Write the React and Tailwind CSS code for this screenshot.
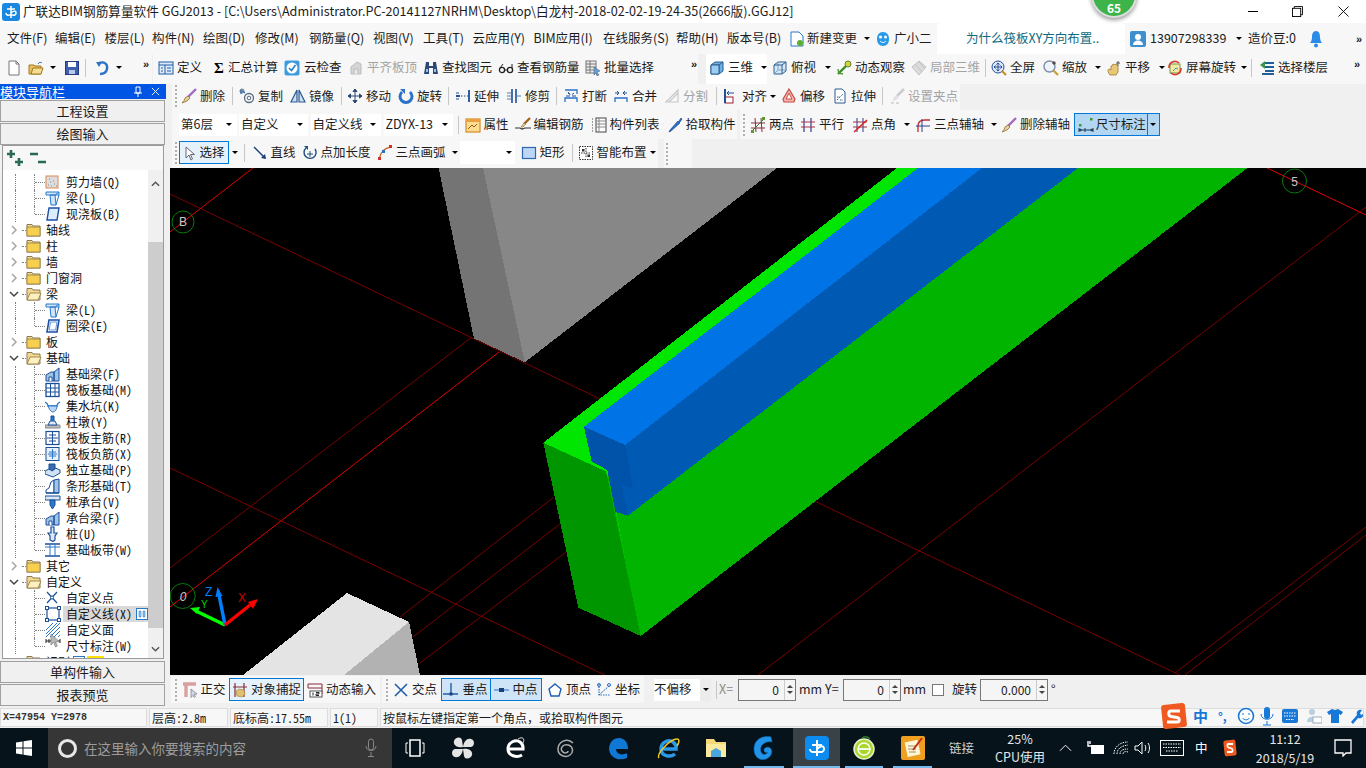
import React from "react";

const cjk = "font-['Noto_Sans_CJK_SC',sans-serif]";
const mono = "font-['Noto_Sans_Mono_CJK_SC','Liberation_Mono','Noto_Sans_CJK_SC',monospace]";

const Svg = ({ children, c = "w-4 h-4" }) => (
  <svg viewBox="0 0 16 16" className={`${c} shrink-0`} fill="none">
    {children}
  </svg>
);

// toolbar icons
const ic = {
  page: <Svg><path d="M3 1h7l3 3v11H3z" fill="#fff" stroke="#777" /><path d="M10 1v3h3" stroke="#777" /></Svg>,
  open: <Svg><path d="M1 5h5l1 1h6v8H1z" fill="#e8c060" stroke="#a07a20" /><path d="M3 14l2-6h10l-2 6z" fill="#f6dc90" stroke="#a07a20" /><path d="M10 4c1-2 3-2 4-1" stroke="#3a7ac0" /></Svg>,
  save: <Svg><rect x="1.5" y="1.5" width="13" height="13" fill="#3f5fb0" stroke="#233a80" /><rect x="4" y="2" width="8" height="5" fill="#fff" /><rect x="5" y="10" width="6" height="4" fill="#bcc8e8" /></Svg>,
  undo: <Svg><path d="M5 3c5-2 9 1 8 6s-5 5-7 5" stroke="#2a72c8" strokeWidth="2.4" /><path d="M2 2l6 0-3 5z" fill="#2a72c8" /></Svg>,
  define: <Svg><rect x="1" y="2" width="14" height="12" fill="#dfeaf6" stroke="#1f5ea8" /><path d="M1 5h14M7 5v9M3 8h2M3 11h2M9 8h4M9 11h4" stroke="#1f5ea8" /></Svg>,
  sigma: <span className="block w-4 text-center text-[15px] leading-4 font-bold text-black font-['Liberation_Serif',serif]">Σ</span>,
  cloud: <Svg><rect x="0.5" y="0.5" width="15" height="15" rx="2" fill="#3d9be0" /><circle cx="8" cy="8" r="5.5" fill="#fff" /><path d="M5 8l2.5 2.5L11.5 5" stroke="#2a7cc4" strokeWidth="1.6" /></Svg>,
  flat: <Svg><path d="M3 14V7l6-5 4 2v10z" fill="#d5d5d5" stroke="#bbb" /><path d="M6 14V9h4v5" fill="#e8e8e8" stroke="#bbb" /></Svg>,
  binoc: <Svg><path d="M3 2h3v4h4V2h3l2 12H10V8H6v6H1z" fill="#2c4a78" /><path d="M3 9h2v3H3zM11 9h2v3h-2z" fill="#9ec0ea" /></Svg>,
  glass: <Svg><circle cx="4" cy="10" r="2.6" stroke="#222" strokeWidth="1.3" /><circle cx="12" cy="10" r="2.6" stroke="#222" strokeWidth="1.3" /><path d="M2 8l3-4M6.5 10h3M14 8v-4" stroke="#222" /></Svg>,
  batch: <Svg><rect x="1" y="1" width="10" height="12" fill="#eee" stroke="#777" /><path d="M1 4h10M1 7h10M1 10h10M5 1v12" stroke="#777" /><path d="M9 7l6 4-3 1 2 3-2 1-1-3-2 2z" fill="#6aa0d8" stroke="#456" strokeWidth=".5" /></Svg>,
  cube: <Svg><path d="M2 5l4-3h8v9l-4 3H2z" fill="#6eb0e4" stroke="#2a5f90" /><path d="M2 5h8v9M10 5l4-3" stroke="#2a5f90" /><path d="M2 5h8v9H2z" fill="#9bcdf2" stroke="#2a5f90" /></Svg>,
  top: <Svg><path d="M2 5l4-3h8v9l-4 3H2z" fill="#d6e7f6" stroke="#2a5f90" /><path d="M6 2v8h8M6 10l-4 4" stroke="#7aa5cc" /><path d="M2 5h8v9M10 5l4-3" stroke="#2a5f90" /></Svg>,
  orbit: <Svg><path d="M2 14L13 3" stroke="#3a8a28" strokeWidth="2.4" /><circle cx="12" cy="4" r="3" fill="#d8d040" stroke="#5a8a20" /><path d="M2 9c0 3 2 5 5 5" stroke="#4a9a30" strokeWidth="1.4" /></Svg>,
  local: <Svg><path d="M8 1l7 6-7 8-7-8z" fill="#dcdcdc" stroke="#c0c0c0" /><path d="M4 4l7 8M8 2l5 6" stroke="#c4c4c4" /></Svg>,
  full: <Svg><circle cx="7" cy="7" r="6" fill="#dbe8f8" stroke="#2a4f9a" /><path d="M7 3v8M3 7h8M7 3L5.5 4.5M7 3l1.5 1.5M7 11L5.5 9.5M7 11l1.5-1.5M3 7l1.500-1.500M3 7l1.500 1.500M11 7L9.500 5.500M11 7L9.500 8.500" stroke="#2a4f9a" /><path d="M11 11l4 4" stroke="#c88a20" strokeWidth="2" /></Svg>,
  zoom: <Svg><circle cx="6.500" cy="6.500" r="5.500" fill="#eef3fa" stroke="#7f8ea8" strokeWidth="1.400" /><path d="M10.500 10.500l4.500 4.500" stroke="#c8a030" strokeWidth="2.200" /><path d="M11 1v4M9 3h4" stroke="#333" /></Svg>,
  pan: <Svg><path d="M4 15c-2-3-3-5-1-6l2 1V6l1 0 1-2 2 1 1-1 2 2v6l-2 3z" fill="#e8c878" stroke="#9a7a30" strokeWidth=".8" /><path d="M12 1v5M10 3h4" stroke="#555" /></Svg>,
  screen: <Svg><rect x="3" y="4" width="10" height="9" fill="#f5e9a0" stroke="#6a9a50" /><path d="M2 8a6 6 0 0 1 10-5M14 8a6 6 0 0 1-10 5" stroke="#d84030" strokeWidth="1.600" /><path d="M6 11l3-3 2 1" stroke="#3a8fd0" /></Svg>,
  floors: <Svg><path d="M6 3h9M6 7h9M6 11h9M3 14h12" stroke="#1f5f9a" strokeWidth="1.800" /><path d="M1 5l5-4v8z" fill="#3a9a4a" /></Svg>,
  brush: <Svg><path d="M15 1L7 9" stroke="#a06ac0" strokeWidth="2.400" /><path d="M7 8l2 2-3 3-5 2c2-2 3-4 3-5z" fill="#e9d29a" stroke="#8a6a30" strokeWidth=".8" /></Svg>,
  copy: <Svg><circle cx="10" cy="10" r="4.500" stroke="#5a6a80" strokeWidth="1.300" /><circle cx="10" cy="10" r="1.800" stroke="#5a6a80" /><path d="M2 2l4 3M2 2v4" stroke="#2a72c8" strokeWidth="1.300" /><circle cx="3" cy="3" r="2" stroke="#5a6a80" /></Svg>,
  mirror: <Svg><path d="M7 2L1 14h6zM9 2l6 12H9z" stroke="#2c5a92" strokeWidth="1.200" fill="#cfe0f2" /></Svg>,
  move: <Svg><path d="M8 1v14M1 8h14M8 1L6 3.500h4zM8 15l-2-2.500h4zM1 8l2.500-2v4zM15 8l-2.500-2v4z" stroke="#2a4a78" fill="#2a4a78" /></Svg>,
  rotate: <Svg><path d="M4 4a6 6 0 1 0 8 0" stroke="#2a72c8" strokeWidth="3" /><path d="M2 1h5v5z" fill="#2a72c8" /></Svg>,
  extend: <Svg><path d="M14 2v12M1 8h4" stroke="#1f4f98" strokeWidth="1.800" /><path d="M1 5h3M1 11h3" stroke="#1f4f98" /><path d="M6 8h7" stroke="#1f4f98" strokeDasharray="1.500 1.500" /></Svg>,
  trim: <Svg><path d="M6 1v14M10 1v14" stroke="#1f4f98" strokeWidth="1.600" /><path d="M1 8h4M11 8h4M1 5h4M1 11h4" stroke="#5a7ab0" /></Svg>,
  split: <Svg><path d="M2 14V10h12v4M2 2h12v4" stroke="#2a72c8" strokeWidth="1.300" /><path d="M3 8h4M9 8h4M5 5l2 1.500L5 4M11 5L9 6.500" stroke="#1f4f98" /></Svg>,
  merge: <Svg><path d="M2 14V10h12v4" stroke="#2a72c8" strokeWidth="1.300" /><path d="M2 5h4M10 5h4M4 3L6 5 4 7M12 3l-2 2 2 2" stroke="#1f4f98" /></Svg>,
  cut: <Svg><path d="M2 14L14 2v12zM5 14L14 5" stroke="#c8c8c8" strokeWidth="1.200" /></Svg>,
  align: <Svg><rect x="2" y="9" width="8" height="6" fill="#fff" stroke="#a02030" /><path d="M2 1v14" stroke="#1f4f98" strokeWidth="2" /><path d="M4 5h7M4 5l2-2M4 5l2 2" stroke="#1f4f98" /></Svg>,
  offset: <Svg><path d="M8 1l6 10-1 3H3l-1-3z" fill="#f4b6b0" stroke="#c84a40" strokeWidth="1.200" /><path d="M8 5l3 6H5z" fill="#fff" stroke="#c84a40" /></Svg>,
  stretch: <Svg><path d="M3 1h7l3 3v11H3z" fill="#fff" stroke="#2c5a92" /><path d="M5 12l6-6M5 9h3M8 12h3" stroke="#2c5a92" strokeDasharray="1.500 1" /></Svg>,
  grip: <Svg><path d="M15 1L8 8" stroke="#ccc" strokeWidth="2.500" /><path d="M8 7l2 2-3 3-4 1c1-1 2-3 2-4z" fill="#e0e0e0" /><path d="M2 15h3M7 15h3" stroke="#bbb" /></Svg>,
  attr: <Svg><rect x="1" y="2" width="14" height="13" fill="#fbdc90" stroke="#d88a20" strokeWidth="1.200" /><path d="M1 2h14v3H1z" fill="#e8a040" /><path d="M3 12l4-4 2 2 3-3" stroke="#a05a10" /></Svg>,
  rebar: <Svg><path d="M15 1L9 7" stroke="#a86020" strokeWidth="2.400" /><path d="M9 6l1.500 1.500L8 10H6z" fill="#e9d29a" stroke="#8a6a30" strokeWidth=".6" /><path d="M0 11h5l2 1 3-1h6" stroke="#333" strokeWidth="1.200" /></Svg>,
  list: <Svg><rect x="5" y="1" width="10" height="14" fill="#fff" stroke="#444" /><path d="M5 4h10M5 7h10M5 10h10M8 1v14" stroke="#888" /><path d="M1 2h2M1 5h2M1 8h2M1 11h2M1 14h2" stroke="#444" strokeDasharray="1 1" /></Svg>,
  pick: <Svg><path d="M14 1l1 1-2 3-1-1zM3 13l8-9 2 2-9 8-2 1z" fill="#2a72c8" stroke="#1a4a90" strokeWidth=".7" /></Svg>,
  two: <Svg><path d="M1 6h14M1 11h14M5 1l1 14M11 1l1 14" stroke="#8a2a40" /><path d="M2 14L14 2" stroke="#3a7a30" /><rect x="1" y="13" width="3" height="3" fill="#5a9a30" /><rect x="12" y="0" width="3" height="3" fill="#5a9a30" /></Svg>,
  para: <Svg><path d="M4 1v14M11 1v14" stroke="#2c3f8a" strokeWidth="1.200" /><path d="M1 5h14M1 10h14" stroke="#b03048" strokeWidth="1.200" /></Svg>,
  angle: <Svg><path d="M5 1v14M11 1v14" stroke="#2c3f8a" /><path d="M1 5h14M1 10h14" stroke="#a03048" /><path d="M2 15L15 3" stroke="#d81818" strokeWidth="1.300" /></Svg>,
  arcax: <Svg><path d="M3 15V9c0-4 3-6 7-6h5" stroke="#c82828" strokeWidth="1.300" /><path d="M1 9h14M7 2v13" stroke="#2c3f8a" /></Svg>,
  del: <Svg><path d="M15 1L7 9" stroke="#a06ac0" strokeWidth="2.400" /><path d="M7 8l2 2-3 3-5 2c2-2 3-4 3-5z" fill="#e9d29a" stroke="#8a6a30" strokeWidth=".8" /></Svg>,
  dim: <Svg><path d="M1 11v4M15 11v4M1 13h14M1 13l2-1v2zM15 13l-2-1v2zM7 11v4" stroke="#1b3a5a" /><rect x="1" y="7" width="2.500" height="2.500" fill="#3a9a30" /><rect x="12" y="1" width="2.500" height="2.500" fill="#3a9a30" /></Svg>,
  arrow: <Svg><path d="M5 2v11l3-3 2 5 1.500-1-2-4.500h4z" fill="#fff" stroke="#667" /></Svg>,
  line: <Svg><path d="M2 2l11 11" stroke="#1b3f78" strokeWidth="1.400" /><path d="M14 14l-5-1 4-4z" fill="#1b3f78" /></Svg>,
  plen: <Svg><path d="M4 3a6 6 0 1 0 9 1" stroke="#1f4f80" strokeWidth="1.400" /><path d="M8 6v6M5 9h6" stroke="#1f4f80" /><path d="M2 1h4v4z" fill="#1f4f80" /></Svg>,
  arc: <Svg><path d="M2 15C3 8 7 3 14 2" stroke="#c8682a" strokeWidth="1.400" /><rect x="1" y="12" width="3" height="3" fill="#d03030" /><rect x="5" y="5" width="3" height="3" fill="#2a72c8" /><rect x="12" y="0" width="3" height="3" fill="#d03030" /></Svg>,
  rect: <Svg><rect x="1.500" y="2.500" width="13" height="11" fill="#bcd6f4" stroke="#2f66b0" strokeWidth="1.200" /></Svg>,
  smart: <Svg><rect x="1.500" y="1.500" width="13" height="13" fill="#fff" stroke="#333" strokeDasharray="1.500 1" /><path d="M8 3v10M3 8h10" stroke="#333" strokeDasharray="1.500 1" /><rect x="4" y="4" width="2.500" height="2.500" fill="#333" /><rect x="9.500" y="9.500" width="2.500" height="2.500" fill="#333" /></Svg>,
  ortho: <Svg><path d="M1 2h13M4 2v13" stroke="#d9a0a0" strokeWidth="3.400" /><path d="M9 7l6 5-3 .5 1.500 2-1 1-1.500-2-2 2z" fill="#cfd8e4" stroke="#667" strokeWidth=".6" /></Svg>,
  snap: <Svg><path d="M3 1v14M12 1v14M1 5h14" stroke="#8a2a3a" strokeWidth="1.200" /><path d="M4 9l3-2 5 1 1 4-3 3-5-1z" fill="#e0c070" stroke="#a08030" strokeWidth=".6" /></Svg>,
  dyn: <Svg><path d="M1 2h14M1 6h14M1 2v4M15 2v10" stroke="#8a2a3a" /><rect x="3" y="9" width="12" height="6" fill="#fff" stroke="#555" /><path d="M6 10.500v3M9 10.500h3v1.500H9v1.500h3" stroke="#222" /></Svg>,
  cross: <Svg><path d="M2 2l12 12M14 2L2 14" stroke="#1f5fb0" strokeWidth="1.600" /></Svg>,
  perp: <Svg><path d="M0 12h15M8 1v11" stroke="#1f5fb0" strokeWidth="1.400" /><rect x="6.500" y="10.500" width="3" height="3" fill="#1b3f78" /></Svg>,
  mid: <Svg><path d="M0 8h15" stroke="#5a8fd0" strokeWidth="1.400" /><rect x="5" y="6" width="5" height="4" fill="#1b3f78" /></Svg>,
  vertex: <Svg><path d="M8 2l6 5-2 7H4L2 7z" fill="#fff" stroke="#1f5fb0" strokeWidth="1.400" /></Svg>,
  coord: <Svg><path d="M3 2v11h11" stroke="#2a72c8" strokeDasharray="1.500 1" strokeWidth="1.200" /><path d="M3 13L14 3" stroke="#1f5fb0" strokeDasharray="2 1" /><circle cx="3" cy="3" r="1.500" stroke="#2a72c8" /><circle cx="13" cy="3" r="1.500" stroke="#2a72c8" /></Svg>,
};

// tree icons
const tr = {
  wall: <Svg><rect x="1" y="2" width="12" height="12" fill="#ddd" stroke="#e08850" /><path d="M3 11h1M6 12h1M9 10h1M5 8h1M8 7h1M11 12h1M4 5h1" stroke="#888" /></Svg>,
  beam: <Svg><path d="M1 2h13v3H1zM5 5h5l1 10H6z" fill="#cfe6f8" stroke="#2a78c8" /><path d="M10 5l4-3M11 15l3-10" stroke="#2a78c8" /></Svg>,
  slab: <Svg><path d="M4 2h10l-2 12H2z" fill="#dcecfb" stroke="#1b4fa8" strokeWidth="1.400" /></Svg>,
  ring: <Svg><path d="M4 2h10l-2 12H2z" fill="#fff" stroke="#1b4fa8" strokeWidth="1.600" /><path d="M5.500 4h6.500l-1.400 8H4.300z" stroke="#6a9ad8" /></Svg>,
  fbeam: <Svg><path d="M1 15V9l5-3h3v9zM9 15V6l5-4v13z" fill="#9ec4ea" stroke="#1b4f98" /><path d="M4 15V11h3v4" fill="#fff" stroke="#1b4f98" /></Svg>,
  raft: <Svg><rect x="1" y="1.500" width="13" height="13" fill="#fff" stroke="#1b4f98" strokeWidth="1.300" /><path d="M1 6h13M1 10h13M5.500 1.500v13M10 1.500v13" stroke="#1b4f98" /></Svg>,
  pit: <Svg><path d="M0 4c2 1 3 2 3 4h9c0-2 1-3 3-4" stroke="#2a78c8" strokeWidth="1.300" /><path d="M3 8c1 3 3 6 5 6s4-3 4-6z" fill="#bcd6f0" stroke="#2a78c8" /></Svg>,
  pier: <Svg><path d="M0 11h15v3H0z" fill="#bbb" stroke="#888" /><path d="M3 11l2-4h5l2 4z" fill="#dce8f6" stroke="#1b4f98" /><path d="M6 7V2h3v5" fill="#2a78c8" stroke="#1b4f98" /></Svg>,
  main: <Svg><rect x="1" y="1.500" width="13" height="13" fill="#fff" stroke="#1b4f98" strokeWidth="1.200" /><path d="M7.500 1.500v13M2 8h11M4 5h7M4 11h7" stroke="#1b4f98" /></Svg>,
  neg: <Svg><rect x="1" y="1.500" width="13" height="13" fill="#e8f0fa" stroke="#1b4f98" /><path d="M7.500 3v10M3 8h9M4 6h7M4 10h7" stroke="#2a78c8" /></Svg>,
  iso: <Svg><path d="M0 9l8-4 7 3v3l-7 4-8-3z" fill="#cfe2f6" stroke="#1b4f98" /><path d="M4 7V2h6v5l-3 2z" fill="#3a6ab0" stroke="#1b4f98" /></Svg>,
  strip: <Svg><path d="M1 15v-3l3-2 2-6 3-2v13z" fill="#fff" stroke="#1b4f98" /><path d="M9 2l5-1v14H9z" fill="#9ec4ea" stroke="#1b4f98" /><path d="M1 15h13" stroke="#1b4f98" strokeWidth="1.300" /></Svg>,
  cap: <Svg><path d="M0 2h15v4H0z" fill="#dce8f6" stroke="#1b4f98" /><path d="M5 6h5v5l-2.500 4L5 11z" fill="#2a78c8" stroke="#1b4f98" /></Svg>,
  pile: <Svg><path d="M6 1h3v6h3l-2 3v4l-2 1.500L5 14v-4L3 7h3z" fill="#dce8f6" stroke="#1b4f98" strokeWidth="1.200" /></Svg>,
  band: <Svg><path d="M0 2h15M0 14h15" stroke="#1b4f98" strokeWidth="1.400" /><path d="M5 2v12M10 2v12M0 5h15" stroke="#2a78c8" /></Svg>,
  pt: <Svg><path d="M2 2l10 11M12 2L2 13" stroke="#1b4f98" strokeWidth="1.200" /><circle cx="7" cy="7.500" r="1.500" fill="#fff" stroke="#1b4f98" /></Svg>,
  cline: <Svg><rect x="2" y="2" width="12" height="12" stroke="#1b4f98" strokeWidth="1.200" /><rect x="0.500" y="0.500" width="3" height="3" fill="#fff" stroke="#1b4f98" /><rect x="12.500" y="0.500" width="3" height="3" fill="#fff" stroke="#1b4f98" /><rect x="0.500" y="12.500" width="3" height="3" fill="#fff" stroke="#1b4f98" /><rect x="12.500" y="12.500" width="3" height="3" fill="#fff" stroke="#1b4f98" /></Svg>,
  face: <Svg><path d="M1 8L8 1M1 12L12 1M1 15L15 1M5 15L15 5M9 15l6-6M13 15l2-2" stroke="#2a78c8" /></Svg>,
  dim: <Svg><path d="M1 1v4M15 1v4M1 3h14M4 1v4M7 1v4M10 1v4" stroke="#222" /></Svg>,
};

const Folder = ({ open }) => (
  <svg viewBox="0 0 16 14" className="w-4 h-[14px] shrink-0">
    <path d="M1 3V1.500h5L7 3h7v10H1z" fill="#f3d98e" stroke="#8a7a55" />
    {open ? (
      <path d="M1 13l3-7h11l-3 7z" fill="#fdf0c0" stroke="#a08a50" />
    ) : (
      <rect x="1" y="4" width="13" height="9" fill="#f7d050" stroke="#a08a50" />
    )}
  </svg>
);

const Caret = ({ w = "w-[11px]" }) => (
  <span className={`${w} shrink-0 flex items-center`}>
    <span className="w-0 h-0 border-x-[3px] border-x-transparent border-t-[3px] border-t-black" />
  </span>
);

const Sep = ({ w = "w-[7px]" }) => (
  <span className={`${w} shrink-0 flex`}>
    <span className="w-px h-[18px] bg-[#c6c6c6]" />
  </span>
);

const Grip = ({ w = "w-[6px]" }) => (
  <span className={`${w} shrink-0 flex flex-col gap-[2px]`}>
    {[0, 1, 2, 3, 4, 5].map((i) => (
      <span key={i} className="w-[2px] h-[2px] bg-[#b0b0b0]" />
    ))}
  </span>
);

const Tool = ({ w, icon, label, gray, g = "ml-[3px]" }) => (
  <div className={`flex items-center shrink-0 ${w} ${gray ? "text-[#a3a3a3]" : ""}`}>
    {icon}
    <span className={`${g} whitespace-nowrap`}>{label}</span>
  </div>
);

const Drop = ({ w, label, mr = "" }) => (
  <div className={`${w} ${mr} h-[22px] bg-white flex items-center justify-between pl-[2px] pr-[5px] shrink-0`}>
    <span className="whitespace-nowrap overflow-hidden">{label}</span>
    <span className="w-0 h-0 border-x-[3px] border-x-transparent border-t-[3px] border-t-black shrink-0" />
  </div>
);

const More = ({ c = "" }) => (
  <span className={`text-[11px] leading-3 font-bold text-[#222] font-['Liberation_Sans',sans-serif] ${c}`}>»</span>
);

const menus = [
  ["w-[48px]", "文件(F)"], ["w-[49.500px]", "编辑(E)"], ["w-[47.500px]", "楼层(L)"], ["w-[51px]", "构件(N)"],
  ["w-[52px]", "绘图(D)"], ["w-[54px]", "修改(M)"], ["w-[64px]", "钢筋量(Q)"], ["w-[50px]", "视图(V)"],
  ["w-[49.500px]", "工具(T)"], ["w-[61px]", "云应用(Y)"], ["w-[69.500px]", "BIM应用(I)"], ["w-[73px]", "在线服务(S)"],
  ["w-[51px]", "帮助(H)"], ["w-[63px]", "版本号(B)"],
];

const tree = [
  { k: "leaf", i: tr.wall, t: "剪力墙(Q)" },
  { k: "leaf", i: tr.beam, t: "梁(L)" },
  { k: "last", i: tr.slab, t: "现浇板(B)" },
  { k: "closed", t: "轴线" },
  { k: "closed", t: "柱" },
  { k: "closed", t: "墙" },
  { k: "closed", t: "门窗洞" },
  { k: "open", t: "梁" },
  { k: "leaf", i: tr.beam, t: "梁(L)" },
  { k: "last", i: tr.ring, t: "圈梁(E)" },
  { k: "closed", t: "板" },
  { k: "open", t: "基础" },
  { k: "leaf", i: tr.fbeam, t: "基础梁(F)" },
  { k: "leaf", i: tr.raft, t: "筏板基础(M)" },
  { k: "leaf", i: tr.pit, t: "集水坑(K)" },
  { k: "leaf", i: tr.pier, t: "柱墩(Y)" },
  { k: "leaf", i: tr.main, t: "筏板主筋(R)" },
  { k: "leaf", i: tr.neg, t: "筏板负筋(X)" },
  { k: "leaf", i: tr.iso, t: "独立基础(P)" },
  { k: "leaf", i: tr.strip, t: "条形基础(T)" },
  { k: "leaf", i: tr.cap, t: "桩承台(V)" },
  { k: "leaf", i: tr.fbeam, t: "承台梁(F)" },
  { k: "leaf", i: tr.pile, t: "桩(U)" },
  { k: "last", i: tr.band, t: "基础板带(W)" },
  { k: "closed", t: "其它" },
  { k: "open", t: "自定义" },
  { k: "leaf", i: tr.pt, t: "自定义点" },
  { k: "leaf", i: tr.cline, t: "自定义线(X)", sel: true },
  { k: "leaf", i: tr.face, t: "自定义面" },
  { k: "last", i: tr.dim, t: "尺寸标注(W)", cursor: true },
];

const GridBadge = () => (
  <svg viewBox="0 0 12 12" className="w-3 h-3 shrink-0">
    <rect x=".5" y=".5" width="11" height="11" fill="#fff" stroke="#2a78c8" />
    <path d="M3 3h2v6H3zM7 3h2v6H7z" fill="#8ac0f0" stroke="#2a78c8" strokeWidth=".5" />
  </svg>
);

function TreeRow({ n }) {
  const folder = n.k === "closed" || n.k === "open";
  return (
    <div className="relative h-4 flex items-center shrink-0">
      {/* dotted connectors */}
      {!folder && <span className="absolute left-[12px] top-0 bottom-0 border-l border-dotted border-[#808080]" />}
      {!folder && (
        <span className={`absolute left-[31px] top-0 border-l border-dotted border-[#808080] ${n.k === "last" ? "h-2" : "h-4"}`} />
      )}
      <span className={`absolute top-2 border-t border-dotted border-[#808080] ${folder ? "left-[19px] w-[4px]" : "left-[32px] w-[10px]"}`} />
      {folder ? (
        <>
          <span className="absolute left-[6px] top-[3px] w-[10px] h-[10px] flex items-center justify-center">
            <svg viewBox="0 0 10 10" className="w-[10px] h-[10px]">
              {n.k === "open" ? <path d="M1 3l4 4 4-4" fill="none" stroke="#444" strokeWidth="1.500" /> : <path d="M3 1l4 4-4 4" fill="none" stroke="#a6a6a6" strokeWidth="1.500" />}
            </svg>
          </span>
          <span className="ml-[23px]"><Folder open={n.k === "open"} /></span>
          <span className="ml-[4px] text-[12px] whitespace-nowrap">{n.t}</span>
        </>
      ) : (
        <>
          <span className="ml-[42px]">{n.i}</span>
          <span className={`ml-[2px] flex-1 h-full flex items-center justify-between text-[12px] whitespace-nowrap ${n.sel ? "bg-[#d9d9d9]" : ""}`}>
            <span className="ml-[3px]">{n.t}</span>
            {n.sel && <GridBadge />}
          </span>
          {n.cursor && (
            <svg viewBox="0 0 12 16" className="absolute left-[47px] top-[-5px] w-[11px] h-[15px]">
              <path d="M1 1v12l3-3 2 5 2-1-2-4.500h4.500z" fill="#b8b8b8" stroke="#777" strokeWidth=".7" />
            </svg>
          )}
        </>
      )}
    </div>
  );
}

const NavBtn = ({ t }) => (
  <div className="h-[22px] w-[165px] shrink-0 flex items-center justify-center bg-[#f0f0f0] border border-[#a0a0a0] text-[13px]">{t}</div>
);

function Scene() {
  const dark = "#7a0000";
  const lit = "#e00000";
  const lines = [
    [170, 194, 1186, 678, dark], [253, 168, 170, 232, lit], [472, 337, 170, 568, dark], [499, 352, 170, 607, lit],
    [170, 468, 632, 688, dark], [554, 497, 400, 617, dark], [560, 524, 413, 637, dark], [566, 552, 420, 663, dark],
    [1267, 168, 1366, 215, lit], [1366, 207, 758, 675, dark], [1366, 527, 1175, 673, dark], [1366, 535, 1185, 675, dark],
  ];
  return (
    <svg viewBox="170 168 1196 507" className="w-full h-full block">
      <g strokeWidth="1">
        {lines.map((l, i) => <line key={i} x1={l[0]} y1={l[1]} x2={l[2]} y2={l[3]} stroke={l[4]} />)}
      </g>
      <g shapeRendering="crispEdges">
        <polygon points="438.600,168 483,168 524.800,362.300 473.900,338.300" fill="#747474" />
        <polygon points="483,168 777,168 524.800,362.300" fill="#878787" />
        <polygon points="347,593 409,622 344,675 243,675" fill="#e4e4e4" />
        <polygon points="409,622 420,675 344,675" fill="#b2b2b2" />
        {/* beam: hull first so the shared edges leave no black seam */}
        <polygon points="543.300,442.700 897,168 1247.400,168 640.700,636 578.300,607.700" fill="#00b400" />
        <polygon points="543.300,442.700 897,168 918,168 584,426.700 591.700,461.700 607.300,470 612,478 543.300,444" fill="#00e600" />
        <polygon points="607.300,470 615.500,512 627,570 611,480" fill="#00cc00" />
        <polygon points="543.300,442.700 606,471.500 640.700,636 578.300,607.700" fill="#009600" />
        <polygon points="584,426.700 918,168 982,168 625,445" fill="#0073e6" />
        <polygon points="625,445 982,168 1078,168 628,515.700 621.700,484 633.300,489" fill="#005ab4" />
        <polygon points="584,426.700 625,445 633.300,489 621.700,484 628,515.700 615.500,512 607.300,470 591.700,461.700" fill="#0053a8" />
      </g>
      <g fill="none" stroke="#0a7a0a">
        <circle cx="183" cy="222" r="11" />
        <circle cx="1294.500" cy="181" r="12" />
        <circle cx="182.700" cy="596" r="12.500" />
      </g>
      <g fill="#c8c8c8" fontSize="12" fontFamily="Liberation Sans, sans-serif" textAnchor="middle">
        <text x="183" y="226">B</text>
        <text x="1294.500" y="186">5</text>
        <text x="183" y="601" fontStyle="italic">0</text>
      </g>
      <path d="M225 625L196 611" stroke="#00ff00" strokeWidth="3.500" />
      <path d="M190 608l10-1-3 7z" fill="#00ff00" />
      <path d="M225 625L219 595" stroke="#0080ff" strokeWidth="3.500" />
      <path d="M217.500 587l5 9-7 1z" fill="#0080ff" />
      <path d="M225 625L250 605" stroke="#ff0000" strokeWidth="3.500" />
      <path d="M258 599l-5 10-5-7z" fill="#ff0000" />
      <g fontFamily="Liberation Sans, sans-serif">
        <text x="205" y="596" fill="#0080ff" fontSize="12">Z</text>
        <text x="201" y="608" fill="#00d000" fontSize="10">Y</text>
        <text x="238" y="602" fill="#d00000" fontSize="12">X</text>
      </g>
    </svg>
  );
}

const Spin = ({ w, v }) => (
  <div className={`${w} h-[22px] bg-[#f5f5f5] border border-[#777] flex items-center justify-end shrink-0`}>
    <span className="text-[12px] mr-[5px]">{v}</span>
    <span className="w-[11px] h-full border-l border-[#ccc] flex flex-col items-center justify-center gap-[3px]">
      <span className="w-0 h-0 border-x-[3px] border-x-transparent border-b-[3px] border-b-[#444]" />
      <span className="w-0 h-0 border-x-[3px] border-x-transparent border-t-[3px] border-t-[#444]" />
    </span>
  </div>
);

const Cell = ({ w, c = "", children }) => (
  <div className={`${w} h-full bg-[#f7f7f7] border border-[#dcdcdc] flex items-center pl-[2px] whitespace-nowrap shrink-0 ${c}`}>{children}</div>
);

// taskbar pictures
const Tb = {
  win: <svg viewBox="0 0 16 16" className="w-4 h-4"><path d="M0 2.500l6.500-1v6H0zM7.500 1.300L16 0v7.500H7.500zM0 8.500h6.500v6l-6.500-1zM7.500 8.500H16V16l-8.500-1.300z" fill="#fff" /></svg>,
  mic: <svg viewBox="0 0 12 20" className="w-3 h-5"><rect x="3.500" y="1" width="5" height="11" rx="2.500" stroke="#888" fill="none" /><path d="M1 8c0 6 10 6 10 0M6 14v4M3 18.500h6" stroke="#888" fill="none" /></svg>,
  view: <svg viewBox="0 0 20 18" className="w-5 h-[18px]"><rect x="5" y="1" width="10" height="16" stroke="#fff" strokeWidth="1.500" fill="none" /><path d="M3 4H1v10h2M17 4h2v10h-2" stroke="#fff" fill="none" /></svg>,
  wheel: <svg viewBox="0 0 22 24" className="w-[22px] h-6"><path d="M11 11C5 12 1 9 2 5s7-5 8-1zM11 11c1-6 4-9 8-8s4 7 0 8zM11 13c6-1 10 2 9 6s-7 5-8 1zM11 13c-1 6-4 9-8 8s-4-7 0-8z" fill="#e4e4e4" /></svg>,
  ieOut: <svg viewBox="0 0 22 24" className="w-[22px] h-6"><path d="M18 19c-5 3-14 1-14-6s8-10 12-7 3 6 3 7H4" stroke="#fff" strokeWidth="3" fill="none" /><path d="M14 3c5-3 7 0 5 4" stroke="#ddd" fill="none" /></svg>,
  spiral: <svg viewBox="0 0 20 20" className="w-5 h-5"><path d="M17 5C11-1 2 4 2 11s8 9 12 6 3-9-2-10-8 3-6 6 6 2 6 0" stroke="#aaa" strokeWidth="1.500" fill="none" /></svg>,
  edge: <svg viewBox="0 0 22 24" className="w-[22px] h-6"><path d="M2 13C2 5 8 2 12 2c6 0 9 5 9 11H9c0 5 6 7 11 4v5c-7 3-17 1-18-9z" fill="#0f78d4" /></svg>,
  ie: <svg viewBox="0 0 24 24" className="w-6 h-6"><path d="M19 18c-5 4-14 2-14-5s8-10 12-7 3 6 3 7H5" stroke="#2a9ae8" strokeWidth="3.500" fill="none" /><path d="M3 22C0 18 14 3 21 3c3 0 2 4 0 7" stroke="#f0c820" strokeWidth="1.500" fill="none" /></svg>,
  folder: <svg viewBox="0 0 24 24" className="w-6 h-6"><path d="M2 3h8l2 3h10v15H2z" fill="#f5d978" /><path d="M2 8h20v13H2z" fill="#fce9a0" /><path d="M7 21v-6l5-3 5 3v6z" fill="#4aa6dc" /></svg>,
  ggj: <svg viewBox="0 0 24 28" className="w-6 h-7"><path d="M19 3C10 1 2 6 2 15s7 12 12 10 7-7 5-10-7-2-7 1 3 3 4 2c-4 6-9 0-7-5s8-6 11-5z" fill="#1f94e8" stroke="#0f6ab8" strokeWidth=".6" /></svg>,
  tile: <svg viewBox="0 0 24 24" className="w-6 h-6"><rect width="24" height="24" rx="4" fill="#0a8cf0" /><path d="M12 4v16M5 13c0 4 4 3 7 3s7 1 7-3-4-3-7 0M7 9h10" stroke="#fff" strokeWidth="2" fill="none" /></svg>,
  ball: <svg viewBox="0 0 24 26" className="w-6 h-[26px]"><circle cx="12" cy="14" r="10" fill="#a8d82c" /><circle cx="12" cy="14" r="10" fill="none" stroke="#e8f0d0" strokeWidth="1.500" /><circle cx="12" cy="14" r="6" fill="none" stroke="#fff" strokeWidth="1.500" /><path d="M6 14h12" stroke="#fff" strokeWidth="1.800" /><path d="M10 3c3-2 6-1 8 1" stroke="#2a7a20" strokeWidth="1.500" fill="none" /></svg>,
  note: <svg viewBox="0 0 24 24" className="w-6 h-6"><rect width="24" height="24" rx="2" fill="#f0a020" /><rect x="5" y="5" width="13" height="15" fill="#fff6d8" transform="rotate(-12 11 12)" /><path d="M7 10h8M7 13h8M8 16h7" stroke="#a09060" /><path d="M21 2L12 14" stroke="#c03020" strokeWidth="2" /></svg>,
  batt: <svg viewBox="0 0 18 16" className="w-[18px] h-4"><rect x="4" y="5" width="13" height="9" fill="#fff" /><path d="M1 1v5h4M3 1v3" stroke="#fff" strokeWidth="1.400" fill="none" /></svg>,
  wifi: <svg viewBox="0 0 16 16" className="w-4 h-4"><path d="M1 14c0-7 6-12 14-12M4 14c0-5 4-8 11-9M7 14c0-3 2-5 8-5M10 14c0-2 2-3 5-2" stroke="#fff" strokeDasharray="1.500 1" fill="none" /></svg>,
  spk: <svg viewBox="0 0 18 16" className="w-[18px] h-4"><path d="M1 6v4h3l4 4V2L4 6z" stroke="#fff" fill="none" /><path d="M11 5c1 2 1 4 0 6M14 3c2 3 2 7 0 10" stroke="#fff" fill="none" /></svg>,
  kbd: <svg viewBox="0 0 24 16" className="w-6 h-4"><rect x=".5" y=".5" width="23" height="15" stroke="#fff" fill="none" /><path d="M3 4h18M3 7.500h18M6 11h12" stroke="#fff" strokeDasharray="1.500 1" /></svg>,
  sogou: <svg viewBox="0 0 14 18" className="w-[14px] h-[18px]"><rect x="1" y="1" width="12" height="16" rx="2" fill="#f05a20" transform="rotate(-6 7 9)" /><path d="M10 5H5.500C4 5 4 8 5.500 8.500l3 1C10 10 10 13 8.500 13H4" stroke="#fff" strokeWidth="1.800" fill="none" /></svg>,
  chat: <svg viewBox="0 0 18 18" className="w-[18px] h-[18px]"><path d="M1 1h16v13h-5l-3 3v-3H1z" stroke="#fff" strokeWidth="1.300" fill="none" /></svg>,
};

export default function App() {
  return (
    <div className={`relative w-[1366px] h-[768px] overflow-hidden flex flex-col bg-[#f0f0f0] text-[#1c1c1c] text-[12.500px] ${cjk}`}>
      {/* title bar */}
      <div className="h-[23px] bg-white flex items-center shrink-0">
        <svg viewBox="0 0 18 18" className="ml-[2px] w-[18px] h-[18px] shrink-0">
          <rect width="18" height="18" rx="3" fill="#1a88e0" />
          <path d="M9 3v12M4 10c0 3 3 2 5 2s5 1 5-2-3-2-5 0M5 6h8" stroke="#fff" strokeWidth="1.500" fill="none" />
        </svg>
        <span className="ml-[3px] text-[12.630px] whitespace-nowrap">广联达BIM钢筋算量软件 GGJ2013 - [C:\Users\Administrator.PC-20141127NRHM\Desktop\白龙村-2018-02-02-19-24-35(2666版).GGJ12]</span>
        <div className="ml-auto flex items-center">
          <span className="w-[45px] flex justify-center"><span className="w-[10px] h-px bg-black" /></span>
          <span className="w-[45px] flex justify-center">
            <svg viewBox="0 0 12 12" className="w-[11px] h-[11px]"><rect x=".5" y="2.500" width="9" height="9" fill="none" stroke="#000" /><path d="M2.500 2.500v-2h9v9h-2" fill="none" stroke="#000" /></svg>
          </span>
          <span className="w-[46px] flex justify-center">
            <svg viewBox="0 0 12 12" className="w-[11px] h-[11px]"><path d="M.5.500l11 11M11.500.500l-11 11" stroke="#000" /></svg>
          </span>
        </div>
      </div>

      {/* menu bar */}
      <div className="h-[31px] bg-[#f7f7f7] flex items-center pl-[7px] shrink-0 text-[12.500px]">
        {menus.map(([w, t]) => <span key={t} className={`${w} shrink-0 whitespace-nowrap`}>{t}</span>)}
        <svg viewBox="0 0 14 16" className="w-[14px] h-4 shrink-0">
          <path d="M1 1h8l4 4v10H1z" fill="#fff" stroke="#2a78c8" />
          <circle cx="10" cy="12" r="3" fill="#5ab030" />
        </svg>
        <span className="ml-[3px] w-[57px] whitespace-nowrap shrink-0">新建变更</span>
        <Caret />
        <svg viewBox="0 0 16 16" className="w-4 h-4 shrink-0">
          <path d="M8 1c4 0 6 3 6 7s-2 7-6 7-6-3-6-7 2-7 6-7z" fill="#2a9ae8" />
          <circle cx="5.500" cy="6" r="1.500" fill="#fff" /><circle cx="10.500" cy="6" r="1.500" fill="#fff" />
          <path d="M5 10c2 2 4 2 6 0" stroke="#fff" fill="none" />
        </svg>
        <span className="ml-[3px] w-[43px] whitespace-nowrap shrink-0">广小二</span>
        <div className="w-[188px] h-[31px] bg-white rounded-t-sm flex items-center pl-[29px] shrink-0 text-[#0e6a80] text-[12.500px] whitespace-nowrap">为什么筏板XY方向布置..</div>
        <svg viewBox="0 0 16 16" className="ml-[5px] w-4 h-4 shrink-0">
          <rect width="16" height="16" rx="2" fill="#3d8fd0" />
          <circle cx="8" cy="6" r="3" fill="#fff" /><path d="M3 14c0-6 10-6 10 0z" fill="#fff" />
        </svg>
        <span className="ml-[4px] w-[86px] shrink-0">13907298339</span>
        <Caret w="w-[12px]" />
        <span className="w-[61px] whitespace-nowrap shrink-0">造价豆:0</span>
        <svg viewBox="0 0 14 18" className="w-[14px] h-[18px] shrink-0">
          <path d="M7 1c3 0 4 3 4 6s1 5 2 6H1c1-1 2-3 2-6s1-6 4-6z" fill="#2a8ae8" /><circle cx="7" cy="15.500" r="2" fill="#2a8ae8" />
        </svg>
        <More c="ml-[33px]" />
      </div>

      {/* toolbar row 1 */}
      <div className="h-[30px] flex items-center shrink-0">
        <div className="w-[152px] h-full bg-[#f7f7f7] flex items-center pl-[6px] pb-[3px] shrink-0">
          {ic.page}
          <span className="w-[6px]" />
          {ic.open}
          <span className="w-[6px]" />
          <Caret w="w-[14px]" />
          {ic.save}
          <span className="w-[5px]" />
          <Sep w="w-[9px]" />
          {ic.undo}
          <span className="w-[6px]" />
          <Caret w="w-[27px]" />
          <More c="-mt-2" />
        </div>
        <div className="w-[545px] h-full bg-[#f7f7f7] flex items-center pl-[5px] pb-[3px] shrink-0 ml-[1px]">
          <Tool w="w-[53px]" icon={ic.define} label="定义" />
          <Tool w="w-[73px]" icon={ic.sigma} label="汇总计算" g="ml-[1px]" />
          <Tool w="w-[64px]" icon={ic.cloud} label="云检查" g="ml-[4px]" />
          <Tool w="w-[75px]" icon={ic.flat} label="平齐板顶" gray />
          <Tool w="w-[75px]" icon={ic.binoc} label="查找图元" />
          <Tool w="w-[87px]" icon={ic.glass} label="查看钢筋量" />
          <Tool w="w-[106px]" icon={ic.batch} label="批量选择" />
          <More c="-mt-2" />
        </div>
        <div className="ml-[8px] w-[61px] h-full bg-white flex items-center pl-[3px] pb-[3px] shrink-0">
          <Tool w="w-[52px]" icon={ic.cube} label="三维" />
          <Caret w="w-[6px]" />
        </div>
        <div className="flex-1 h-full bg-[#f7f7f7] flex items-center pl-[5px] pb-[3px]">
          <Tool w="w-[53px]" icon={ic.top} label="俯视" />
          <Caret />
          <Tool w="w-[75px]" icon={ic.orbit} label="动态观察" />
          <Tool w="w-[74px]" icon={ic.local} label="局部三维" gray />
          <Sep w="w-[6px]" />
          <Tool w="w-[52px]" icon={ic.full} label="全屏" />
          <Tool w="w-[52px]" icon={ic.zoom} label="缩放" />
          <Caret />
          <Tool w="w-[53px]" icon={ic.pan} label="平移" />
          <Caret w="w-[8px]" />
          <Tool w="w-[74px]" icon={ic.screen} label="屏幕旋转" />
          <Caret w="w-[10px]" />
          <Sep w="w-[8px]" />
          <Tool w="w-[75px]" icon={ic.floors} label="选择楼层" />
          <More c="ml-[20px] -mt-2" />
        </div>
      </div>

      {/* main area */}
      <div className="h-[623px] flex shrink-0">
        {/* module navigator */}
        <div className="w-[170px] shrink-0 flex flex-col">
          <div className="h-[15px] w-[166px] bg-[#0055e5] text-white text-[13px] leading-[15px] flex items-center shrink-0">
            <span className="w-[65px] whitespace-nowrap shrink-0">模块导航栏</span>
            <svg viewBox="0 0 10 12" className="ml-[68px] w-[10px] h-3"><path d="M3 1h4v6H3zM1 7h8M5 7v4" stroke="#fff" fill="none" /></svg>
            <svg viewBox="0 0 10 10" className="ml-[8px] w-[9px] h-[9px]"><path d="M1 1l8 8M9 1L1 9" stroke="#fff" /></svg>
          </div>
          <div className="mt-[1px]"><NavBtn t="工程设置" /></div>
          <div className="mt-[1px]"><NavBtn t="绘图输入" /></div>
          <div className="ml-[2px] w-[162px] h-[514px] border border-[#9a9a9a] bg-white flex flex-col shrink-0 overflow-hidden">
            <div className="h-[24px] shrink-0 bg-[#f7f7f7] flex items-center pl-[4px] gap-[7px]">
              <svg viewBox="0 0 16 16" className="w-4 h-4"><path d="M4 0v8M0 4h8M12 8v8M8 12h8" stroke="#2a6a50" strokeWidth="2.600" /></svg>
              <svg viewBox="0 0 16 16" className="w-4 h-4"><path d="M0 4h8M8 12h8" stroke="#2a6a50" strokeWidth="2.600" /></svg>
            </div>
            <div className="flex-1 flex overflow-hidden">
              <div className={`flex-1 pt-[4px] overflow-hidden text-[#111] ${mono}`}>
                {tree.map((n) => <TreeRow key={n.t + n.k} n={n} />)}
                <div className="relative h-4 flex items-center shrink-0 text-[12px] pl-[23px]">
                  <Folder />
                  <span className="ml-[4px] whitespace-nowrap">识别</span>
                  <span className="ml-[3px]"><GridBadge /></span>
                  <span className="ml-[2px] bg-[#ffe000] text-[#b06000] text-[10px] leading-3 px-[1px] font-bold">NEW</span>
                </div>
              </div>
              <div className="w-[15px] shrink-0 bg-[#f0f0f0] flex flex-col items-center">
                <svg viewBox="0 0 10 6" className="mt-[11px] w-[9px] h-[6px] shrink-0"><path d="M1 5l4-4 4 4" stroke="#555" strokeWidth="1.600" fill="none" /></svg>
                <span className="mt-[55px] w-full h-[386px] bg-[#cdcdcd] shrink-0" />
                <svg viewBox="0 0 10 6" className="mt-[18px] w-[9px] h-[6px] shrink-0"><path d="M1 1l4 4 4-4" stroke="#555" strokeWidth="1.600" fill="none" /></svg>
              </div>
            </div>
          </div>
          <div className="mt-[2px]"><NavBtn t="单构件输入" /></div>
          <div className="mt-[1px]"><NavBtn t="报表预览" /></div>
        </div>

        {/* right column */}
        <div className="flex-1 flex flex-col min-w-0">
          <div className="h-[26px] flex items-center shrink-0 pl-[2px]">
            <div className="w-[788px] h-full bg-[#f7f7f7] flex items-center pl-[3px] pb-[2px] shrink-0">
              <Grip />
              <Tool w="w-[51px]" icon={ic.brush} label="删除" />
              <Sep />
              <Tool w="w-[51px]" icon={ic.copy} label="复制" />
              <Tool w="w-[51px]" icon={ic.mirror} label="镜像" />
              <Sep w="w-[6px]" />
              <Tool w="w-[51px]" icon={ic.move} label="移动" />
              <Tool w="w-[50px]" icon={ic.rotate} label="旋转" />
              <Sep />
              <Tool w="w-[51px]" icon={ic.extend} label="延伸" />
              <Tool w="w-[50px]" icon={ic.trim} label="修剪" />
              <Sep />
              <Tool w="w-[50px]" icon={ic.split} label="打断" />
              <Tool w="w-[51px]" icon={ic.merge} label="合并" />
              <Tool w="w-[52px]" icon={ic.cut} label="分割" gray />
              <Sep />
              <Tool w="w-[47px]" icon={ic.align} label="对齐" />
              <Caret />
              <Tool w="w-[51px]" icon={ic.offset} label="偏移" />
              <Tool w="w-[50px]" icon={ic.stretch} label="拉伸" />
              <Sep />
              <Tool w="w-[70px]" icon={ic.grip} label="设置夹点" gray />
            </div>
          </div>

          <div className="h-[29px] flex items-center shrink-0 pl-[2px]">
            <div className="w-[565px] h-full bg-[#f7f7f7] flex items-center pl-[7px] shrink-0">
              <Drop w="w-[58px]" mr="mr-[2px]" label="第6层" />
              <Drop w="w-[69px]" mr="mr-[2.500px]" label="自定义" />
              <Drop w="w-[70px]" mr="mr-[3px]" label="自定义线" />
              <Drop w="w-[69px]" mr="mr-[5px]" label="ZDYX-13" />
              <Sep />
              <Tool w="w-[50px]" icon={ic.attr} label="属性" />
              <Tool w="w-[76px]" icon={ic.rebar} label="编辑钢筋" />
              <Tool w="w-[76px]" icon={ic.list} label="构件列表" />
              <Tool w="w-[71px]" icon={ic.pick} label="拾取构件" />
            </div>
            <div className="ml-[3px] w-[420px] h-full bg-[#f7f7f7] flex items-center pl-[3px] shrink-0">
              <Grip w="w-[7px]" />
              <Tool w="w-[50px]" icon={ic.two} label="两点" />
              <Tool w="w-[52px]" icon={ic.para} label="平行" />
              <Tool w="w-[52px]" icon={ic.angle} label="点角" />
              <Caret />
              <Tool w="w-[76px]" icon={ic.arcax} label="三点辅轴" />
              <Caret w="w-[10px]" />
              <Tool w="w-[72.700px]" icon={ic.del} label="删除辅轴" />
              <div className="w-[74px] h-[23px] bg-[#b3d7f3] border border-[#0078d7] flex items-center pl-[3px] shrink-0">
                {ic.dim}
                <span className="ml-[2px] whitespace-nowrap">尺寸标注</span>
              </div>
              <div className="w-[12px] h-[23px] bg-[#b3d7f3] border border-l-0 border-[#0078d7] flex items-center justify-center shrink-0">
                <span className="w-0 h-0 border-x-[3px] border-x-transparent border-t-[3px] border-t-black" />
              </div>
            </div>
          </div>

          <div className="h-[29px] flex items-center shrink-0 pl-[2px]">
            <div className="w-[486px] h-full bg-[#f7f7f7] flex items-center pl-[3px] pb-[2px] shrink-0">
              <Grip w="w-[3.600px]" />
              <div className="w-[50px] h-[23px] bg-[#e5f1fb] border border-[#0078d7] flex items-center pl-[1px] shrink-0">
                {ic.arrow}
                <span className="ml-[3px] whitespace-nowrap">选择</span>
              </div>
              <span className="w-[3px]" />
              <Caret w="w-[12px]" />
              <Sep w="w-[8px]" />
              <Tool w="w-[50px]" icon={ic.line} label="直线" />
              <Tool w="w-[75px]" icon={ic.plen} label="点加长度" />
              <Tool w="w-[75px]" icon={ic.arc} label="三点画弧" />
              <Caret w="w-[8px]" />
              <div className="w-[55px] h-[23px] bg-white flex items-center justify-end pr-[3px] shrink-0">
                <span className="w-0 h-0 border-x-[3px] border-x-transparent border-t-[3px] border-t-black" />
              </div>
              <span className="w-[6px]" />
              <Tool w="w-[51px]" icon={ic.rect} label="矩形" />
              <Sep w="w-[6px]" />
              <Tool w="w-[72px]" icon={ic.smart} label="智能布置" />
              <Caret w="w-[7px]" />
            </div>
            <div className="ml-[6px] w-[28px] h-full bg-[#f7f7f7] flex items-center pl-[2px] shrink-0">
              <Grip />
            </div>
          </div>

          <div className="h-[507px] shrink-0 bg-black overflow-hidden">
            <Scene />
          </div>

          {/* bottom toolbar */}
          <div className="h-[32px] flex items-center shrink-0 pl-[1px] pb-[3px]">
            <div className="w-[209px] h-[27px] bg-[#f7f7f7] flex items-center pl-[4px] shrink-0">
              <Grip w="w-[6.500px]" />
              <Tool w="w-[47.500px]" icon={ic.ortho} label="正交" />
              <div className="w-[75px] h-[23px] bg-[#e5f1fb] border border-[#0078d7] flex items-center pl-[2px] shrink-0">
                {ic.snap}
                <span className="ml-[3px] whitespace-nowrap">对象捕捉</span>
              </div>
              <span className="w-[3px]" />
              <Tool w="w-[73px]" icon={ic.dyn} label="动态输入" />
            </div>
            <div className="ml-[2px] w-[262px] h-[27px] bg-[#f7f7f7] flex items-center pl-[4px] shrink-0">
              <Grip w="w-[7px]" />
              <Tool w="w-[47.600px]" icon={ic.cross} label="交点" />
              <div className="w-[50px] h-[23px] bg-[#cfe4f7] border border-[#0078d7] flex items-center pl-[1px] shrink-0">
                {ic.perp}
                <span className="ml-[4px] whitespace-nowrap">垂点</span>
              </div>
              <div className="w-[51.500px] h-[23px] bg-[#cfe4f7] border border-l-0 border-[#0078d7] flex items-center pl-[3px] shrink-0">
                {ic.mid}
                <span className="ml-[3px] whitespace-nowrap">中点</span>
              </div>
              <span className="w-[5px]" />
              <Tool w="w-[49px]" icon={ic.vertex} label="顶点" />
              <Tool w="w-[48px]" icon={ic.coord} label="坐标" />
            </div>
            <div className="ml-[10px] flex-1 h-[27px] flex items-center">
              <div className="w-[46px] h-[22px] bg-white flex items-center shrink-0 whitespace-nowrap">不偏移</div>
              <span className="w-[11px] h-[22px] bg-[#ececec] flex items-center justify-center shrink-0">
                <span className="w-0 h-0 border-x-[3px] border-x-transparent border-t-[3px] border-t-black" />
              </span>
              <span className="w-[5px]" />
              <Sep w="w-[3px]" />
              <span className="text-[#8a8a8a] w-[19px] shrink-0">X=</span>
              <Spin w="w-[58px]" v="0" />
              <span className="ml-[3px] w-[26px] shrink-0">mm</span>
              <span className="w-[18px] shrink-0">Y=</span>
              <Spin w="w-[58px]" v="0" />
              <span className="ml-[2px] w-[29px] shrink-0">mm</span>
              <span className="w-3 h-3 border border-[#777] bg-white shrink-0" />
              <span className="ml-[8px] w-[28px] shrink-0">旋转</span>
              <Spin w="w-[68px]" v="0.000" />
              <span className="ml-[3px]">°</span>
            </div>
          </div>
        </div>
      </div>

      {/* status bar */}
      <div className={`h-[21px] flex items-stretch py-[1px] gap-[2px] shrink-0 text-[12px] ${mono}`}>
        <Cell w="w-[147px]" c="text-[10px] font-bold text-[#333] font-['Liberation_Mono',monospace]">X=47954 Y=2978</Cell>
        <Cell w="w-[79px]">层高:2.8m</Cell>
        <Cell w="w-[98px]">底标高:17.55m</Cell>
        <Cell w="w-[48px]">1(1)</Cell>
        <Cell w="w-[984px]">按鼠标左键指定第一个角点，或拾取构件图元</Cell>
      </div>

      {/* taskbar */}
      <div className="h-[40px] bg-[#07131a] flex items-center text-white shrink-0 text-[12.500px]">
        <div className="w-[48px] flex justify-center shrink-0">{Tb.win}</div>
        <div className="w-[344px] h-full bg-[#363636] flex items-center pl-[10px] shrink-0">
          <span className="w-[19px] h-[19px] rounded-full border-[3px] border-[#e8e8e8] shrink-0" />
          <span className="ml-[7px] text-[#9c9c9c] text-[13.500px] whitespace-nowrap">在这里输入你要搜索的内容</span>
          <span className="ml-auto mr-[15px]">{Tb.mic}</span>
        </div>
        <div className="w-[46px] flex justify-center shrink-0">{Tb.view}</div>
        <div className="w-[50px] flex justify-center shrink-0">{Tb.wheel}</div>
        <div className="w-[53px] flex justify-center shrink-0">{Tb.ieOut}</div>
        <div className="w-[50px] flex justify-center shrink-0">{Tb.spiral}</div>
        <div className="w-[53px] flex justify-center shrink-0">{Tb.edge}</div>
        <div className="w-[48px] flex justify-center shrink-0">{Tb.ie}</div>
        <div className="w-[48px] flex justify-center shrink-0">{Tb.folder}</div>
        <div className="w-[48px] h-full flex flex-col items-center justify-center relative shrink-0">
          {Tb.ggj}
          <span className="absolute bottom-0 left-[4px] w-[40px] h-[2px] bg-[#76b9ed]" />
        </div>
        <div className="ml-[5px] w-[47px] h-full bg-[#3a4247] flex items-center justify-center relative shrink-0">
          {Tb.tile}
          <span className="absolute bottom-0 left-0 w-full h-[2px] bg-[#76b9ed]" />
        </div>
        <div className="ml-[5px] w-[38px] h-full flex items-center justify-center relative shrink-0">
          {Tb.ball}
          <span className="absolute bottom-0 left-0 w-full h-[2px] bg-[#76b9ed]" />
        </div>
        <div className="ml-[10px] w-[39px] h-full flex items-center justify-center relative shrink-0">
          {Tb.note}
          <span className="absolute bottom-0 left-0 w-full h-[2px] bg-[#76b9ed]" />
        </div>
        <span className="ml-[17px] w-[36px] shrink-0 text-[#cfcfcf] whitespace-nowrap">链接</span>
        <div className="w-[70px] flex flex-col items-center leading-[18px] shrink-0 text-[#e6e6e6]">
          <span>25%</span>
          <span className="whitespace-nowrap">CPU使用</span>
        </div>
        <svg viewBox="0 0 14 8" className="ml-[4px] w-[13px] h-2 shrink-0"><path d="M1 7l6-6 6 6" stroke="#fff" fill="none" /></svg>
        <span className="ml-[15px]">{Tb.batt}</span>
        <span className="ml-[8px]">{Tb.wifi}</span>
        <span className="ml-[5px]">{Tb.spk}</span>
        <span className="ml-[8px]">{Tb.kbd}</span>
        <span className="ml-[11px] w-[14px] shrink-0">中</span>
        <span className="ml-[14px]">{Tb.sogou}</span>
        <div className="ml-[17px] w-[62px] flex flex-col items-center leading-[19px] shrink-0 text-[#e6e6e6] whitespace-nowrap">
          <span>11:12</span>
          <span>2018/5/19</span>
        </div>
        <span className="ml-[18px]">{Tb.chat}</span>
      </div>

      {/* floating score badge */}
      <div className="absolute left-[1091px] top-[-28px] w-[46px] h-[46px] rounded-full bg-[#3cb44a] border-2 border-[#dcdcdc] shadow-[0_2px_4px_rgba(0,0,0,0.4)] flex items-end justify-center pb-[1px] text-white text-[12px] font-bold leading-[14px]">65</div>

      {/* floating input-method bar */}
      <div className="absolute left-[1161px] top-[703px] h-[26px] flex items-center">
        <svg viewBox="0 0 26 26" className="w-[26px] h-[26px] shrink-0">
          <rect x="1" y="1" width="24" height="24" rx="3" fill="#f05a20" transform="rotate(-6 13 13)" />
          <path d="M19 8H10c-3 0-3 5 0 5.500l6 1c3 .5 3 4.500 0 4.500H6" stroke="#fff" strokeWidth="3" fill="none" />
        </svg>
        <span className="ml-[6px] w-[25px] text-[15px] font-bold text-[#1878d8] leading-4 shrink-0">中</span>
        <span className="w-[19px] text-[12px] font-bold text-[#1878d8] leading-4 shrink-0">°,</span>
        <svg viewBox="0 0 18 18" className="w-[18px] h-[18px] shrink-0">
          <circle cx="9" cy="9" r="7.500" stroke="#1878d8" strokeWidth="1.600" fill="#fff" />
          <path d="M6 6v2M12 6v2M5.500 11c2 2.500 5 2.500 7 0" stroke="#1878d8" fill="none" />
        </svg>
        <svg viewBox="0 0 14 20" className="ml-[5px] w-[14px] h-5 shrink-0">
          <rect x="4" y="1" width="6" height="12" rx="3" fill="#1878d8" />
          <path d="M1 8c0 7 12 7 12 0M7 15v4M3 19h8" stroke="#1878d8" fill="none" />
        </svg>
        <svg viewBox="0 0 16 14" className="ml-[8px] w-4 h-[14px] shrink-0">
          <rect width="16" height="14" rx="2" fill="#1878d8" />
          <path d="M2 4h12M2 7h12M4 10.500h8" stroke="#fff" strokeDasharray="1.500 1" />
        </svg>
        <svg viewBox="0 0 16 16" className="ml-[8px] w-4 h-4 shrink-0">
          <circle cx="6" cy="4" r="3" fill="#b8cfe0" /><path d="M1 14c0-7 10-7 10 0z" fill="#b8cfe0" /><rect x="7" y="9" width="9" height="6" fill="#fff" stroke="#9ab" />
        </svg>
        <svg viewBox="0 0 16 16" className="ml-[5px] w-4 h-4 shrink-0">
          <path d="M5 1l3 1 3-1 5 3-2 3-2-1v9H4V6L2 7 0 4z" fill="#1878d8" />
        </svg>
        <svg viewBox="0 0 16 16" className="ml-[5px] w-4 h-4 shrink-0">
          <path d="M3 14l6-7c-1-3 1-6 5-5l-2 3 1 2 2-1c1 3-2 5-5 4l-5 6z" fill="#1878d8" />
        </svg>
      </div>
    </div>
  );
}
